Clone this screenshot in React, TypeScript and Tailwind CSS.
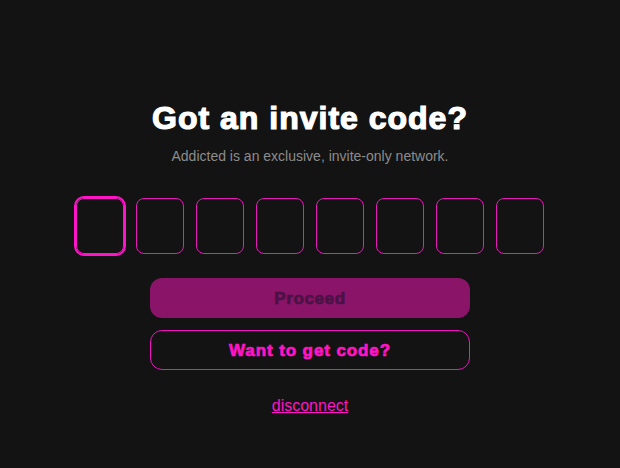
import React from "react";

export default function App() {
  const boxes = [0, 1, 2, 3, 4, 5, 6, 7];
  return (
    <div className="w-full h-[468px] bg-[#131313] flex flex-col items-center font-['Liberation_Sans',Arial,sans-serif]">
      <h1 className="mt-[99px] text-[32px] leading-[38px] font-bold text-white tracking-[1px] [-webkit-text-stroke:1.2px_white]">
        Got an invite code?
      </h1>
      <p className="mt-[11px] text-[14px] leading-[16px] text-[#8c8c8c]">
        Addicted is an exclusive, invite-only network.
      </p>
      <div className="mt-[34px] flex gap-3">
        {boxes.map((i) => (
          <div
            key={i}
            className={
              i === 0
                ? "w-12 h-[56px] rounded-lg border border-[#ff14c8] outline-2 outline-[#ff14c8] bg-[#131313]"
                : "w-12 h-[56px] rounded-lg border border-[#e61ab8] bg-[#131313]"
            }
          />
        ))}
      </div>
      <button className="mt-6 w-[320px] h-10 pt-px rounded-xl bg-[#8a1468] text-[#4b1246] text-[17px] font-bold tracking-[0.6px] [-webkit-text-stroke:0.7px_#4b1246]">
        Proceed
      </button>
      <button className="mt-3 w-[320px] h-10 pt-px rounded-xl border border-[#f014c0] text-[#ff14c8] text-[17px] font-bold tracking-[0.9px] [-webkit-text-stroke:0.7px_#ff14c8]">
        Want to get code?
      </button>
      <a href="#" className="mt-[27px] text-[16px] leading-[18px] text-[#ff14c8] underline">
        disconnect
      </a>
    </div>
  );
}
